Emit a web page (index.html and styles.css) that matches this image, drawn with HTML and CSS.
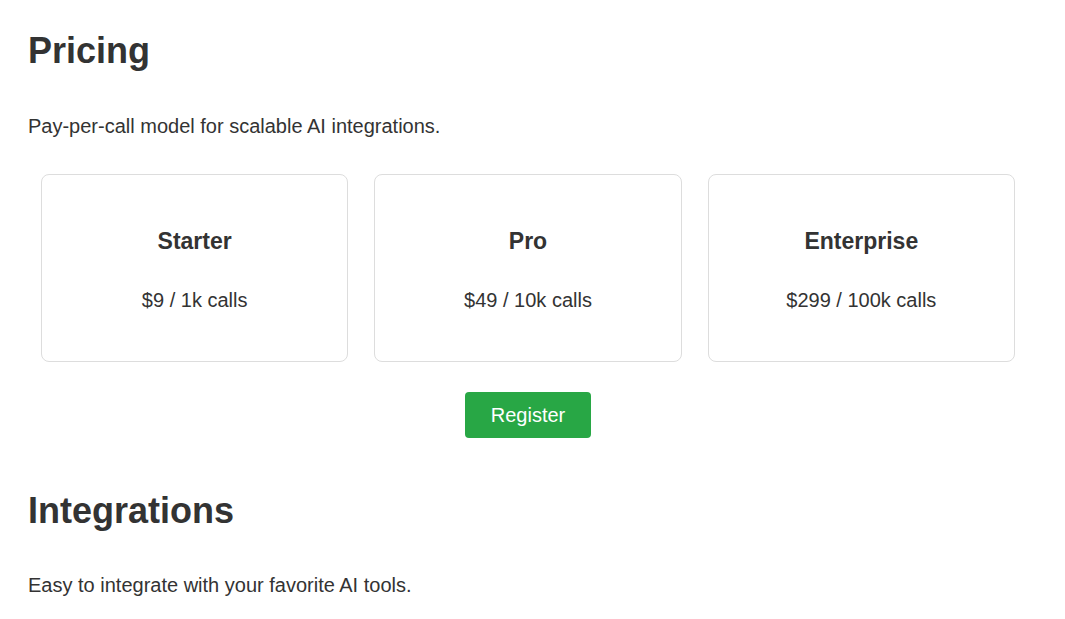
FILE: index.html
```html
<!DOCTYPE html>
<html lang="en">
<head>
<meta charset="utf-8">
<title>Pricing</title>
<link rel="stylesheet" href="styles.css">
</head>
<body>
<main class="page">
  <section class="pricing">
    <h2 class="title">Pricing</h2>
    <p class="lead">Pay-per-call model for scalable AI integrations.</p>
    <div class="plans">
      <div class="plan">
        <h3 class="plan-name">Starter</h3>
        <p class="plan-price">$9 / 1k calls</p>
      </div>
      <div class="plan">
        <h3 class="plan-name">Pro</h3>
        <p class="plan-price">$49 / 10k calls</p>
      </div>
      <div class="plan">
        <h3 class="plan-name">Enterprise</h3>
        <p class="plan-price">$299 / 100k calls</p>
      </div>
    </div>
    <div class="actions">
      <button class="btn-register" type="button">Register</button>
    </div>
  </section>
  <section class="integrations">
    <h2 class="title">Integrations</h2>
    <p class="lead lead-int">Easy to integrate with your favorite AI tools.</p>
  </section>
</main>
</body>
</html>
```
FILE: styles.css
```css
* { box-sizing: border-box; }
html, body {
  margin: 0;
  padding: 0;
  background: #fff;
}
body {
  font-family: "Liberation Sans", Arial, sans-serif;
  color: #333;
}
.page {
  max-width: 1056px;
  padding: 0 28px;
}
.title {
  font-size: 36px;
  line-height: 42px;
  font-weight: bold;
  margin: 0;
}
.pricing .title { margin-top: 30px; }
.lead {
  font-size: 20px;
  line-height: 23px;
  margin: 43px 0 0;
}
.plans {
  display: flex;
  gap: 26px;
  padding: 0 13px;
  margin-top: 36px;
  max-width: 1000px;
}
.plan {
  flex: 1;
  border: 1px solid #ddd;
  border-radius: 8px;
  text-align: center;
}
.plan-name {
  font-size: 23px;
  line-height: 26px;
  font-weight: bold;
  margin: 53px 0 0;
}
.plan-price {
  font-size: 20px;
  line-height: 23px;
  margin: 35px 0 49px;
}
.actions {
  max-width: 1000px;
  display: flex;
  justify-content: center;
  margin-top: 30px;
}
.btn-register {
  font-family: "Liberation Sans", Arial, sans-serif;
  font-size: 20px;
  line-height: 22px;
  padding: 12px 26px;
  color: #fff;
  background: #28a745;
  border: none;
  border-radius: 4px;
  cursor: pointer;
}
.integrations .title { margin-top: 52px; }
.lead-int { margin-top: 42px; }
```
